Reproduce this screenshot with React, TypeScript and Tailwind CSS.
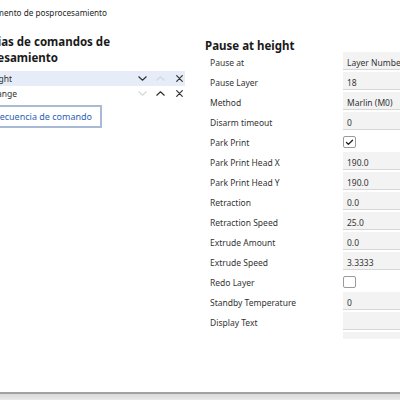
import { Check } from "lucide-react";

const font = { fontFamily: '"Noto Sans", "Open Sans", sans-serif' };

type Setting = {
  label: string;
  value?: string;
  check?: boolean;
};

const settings: Setting[] = [
  { label: "Pause at", value: "Layer Number" },
  { label: "Pause Layer", value: "18" },
  { label: "Method", value: "Marlin (M0)" },
  { label: "Disarm timeout", value: "0" },
  { label: "Park Print", check: true },
  { label: "Park Print Head X", value: "190.0" },
  { label: "Park Print Head Y", value: "190.0" },
  { label: "Retraction", value: "0.0" },
  { label: "Retraction Speed", value: "25.0" },
  { label: "Extrude Amount", value: "0.0" },
  { label: "Extrude Speed", value: "3.3333" },
  { label: "Redo Layer", check: false },
  { label: "Standby Temperature", value: "0" },
  { label: "Display Text", value: "" },
  { label: "", value: "" },
];

const ChevronDown = ({ muted }: { muted?: boolean }) => (
  <svg width="9" height="5" viewBox="0 0 9 5" fill="none">
    <path
      d="M0.8 0.8 L4.5 4.2 L8.2 0.8"
      stroke={muted ? "#d3d7de" : "#333"}
      strokeWidth="1.2"
      strokeLinecap="round"
      strokeLinejoin="round"
    />
  </svg>
);

const ChevronUp = ({ muted }: { muted?: boolean }) => (
  <svg width="9" height="5" viewBox="0 0 9 5" fill="none">
    <path
      d="M0.8 4.2 L4.5 0.8 L8.2 4.2"
      stroke={muted ? "#d3d7de" : "#333"}
      strokeWidth="1.2"
      strokeLinecap="round"
      strokeLinejoin="round"
    />
  </svg>
);

const Cross = () => (
  <svg width="7" height="7" viewBox="0 0 7 7" fill="none">
    <path d="M0.7 0.7 L6.3 6.3 M6.3 0.7 L0.7 6.3" stroke="#333" strokeWidth="1.2" strokeLinecap="round" />
  </svg>
);

const ScriptRow = ({
  name,
  textEnd,
  active,
  first,
}: {
  name: string;
  textEnd: string;
  active?: boolean;
  first?: boolean;
}) => (
  <div className={`flex h-[15px] w-[185px] items-center ${active ? "bg-[#e7edf8]" : ""}`}>
    <div className={`flex justify-end overflow-hidden whitespace-nowrap ${textEnd}`}>
      <span className="text-[8.5px] leading-[15px] text-[#303030]">{name}</span>
    </div>
    <div className="ml-auto flex items-center gap-[6.5px]">
      <div className="flex w-[12px] justify-center">
        <ChevronDown muted={!first} />
      </div>
      <div className="flex w-[12px] justify-center">
        <ChevronUp muted={first} />
      </div>
      <div className="flex w-[12px] justify-center">
        <Cross />
      </div>
    </div>
  </div>
);

const SettingRow = ({ s }: { s: Setting }) => (
  <div className="flex h-[20px] shrink-0">
    <div className="w-[138px] shrink-0 pl-[5px] pt-[1px] text-[8.5px] leading-[20px] text-[#333]">
      {s.label}
    </div>
    {s.check === undefined ? (
      <div className="h-[18px] flex-1 overflow-hidden whitespace-nowrap border-b border-[#d6d6d6] bg-[#f3f3f3] pl-[4px] pt-[1px] text-[8.5px] leading-[20px] text-[#333]">
        {s.value}
      </div>
    ) : (
      <div className="flex-1">
        <div className="mt-[4px] flex h-[12px] w-[13px] items-center justify-center rounded-[2px] border border-[#9a9a9a] bg-white">
          {s.check && <Check size={9} strokeWidth={3.5} color="#1e1e1e" />}
        </div>
      </div>
    )}
  </div>
);

export default function App() {
  return (
    <div className="flex h-[400px] w-[400px] flex-col overflow-hidden bg-white" style={font}>
      <div className="flex h-[30px] shrink-0">
        <div className="flex w-[107px] justify-end overflow-hidden whitespace-nowrap">
          <span className="text-[8.2px] leading-[26px] text-[#1e1e1e]">
            Complemento de posprocesamiento
          </span>
        </div>
      </div>

      <div className="flex min-h-0 flex-1">
        <div className="w-[205px] shrink-0 pt-[4px]">
          <div className="flex w-[110px] justify-end overflow-hidden whitespace-nowrap">
            <span className="text-[11.5px] font-bold leading-[16px] text-[#1a1a1a]">
              Secuencias de comandos de
            </span>
          </div>
          <div className="flex w-[58px] justify-end overflow-hidden whitespace-nowrap">
            <span className="text-[11.5px] font-bold leading-[16px] text-[#1a1a1a]">
              posprocesamiento
            </span>
          </div>
          <div className="mt-[5px] flex flex-col">
            <ScriptRow name="Pause at height" textEnd="w-[12px]" active first />
            <ScriptRow name="Filament Change" textEnd="w-[17px]" />
          </div>
          <div className="mt-[4px] flex w-[102px] justify-end overflow-hidden">
            <div className="flex h-[23px] shrink-0 items-center whitespace-nowrap border-2 border-[#a9bad6] bg-white pl-[10px] pr-[8px]">
              <span className="text-[9px] leading-[12px] text-[#2d5fb4]">
                Añadir una secuencia de comando
              </span>
            </div>
          </div>
        </div>

        <div className="flex min-w-0 flex-1 flex-col">
          <div className="h-[22px] shrink-0 pt-[8px]">
            <div className="text-[11.5px] font-bold leading-[16px] text-[#1a1a1a]">
              Pause at height
            </div>
          </div>
          <div className="flex h-[287px] flex-col overflow-hidden">
            {settings.map((s, i) => (
              <SettingRow key={i} s={s} />
            ))}
          </div>
        </div>
      </div>

      <div className="h-[8px] shrink-0 border-t-2 border-[#a2a2a2] bg-gradient-to-b from-[#d9d9d9] to-[#e9e9e9]" />
    </div>
  );
}
